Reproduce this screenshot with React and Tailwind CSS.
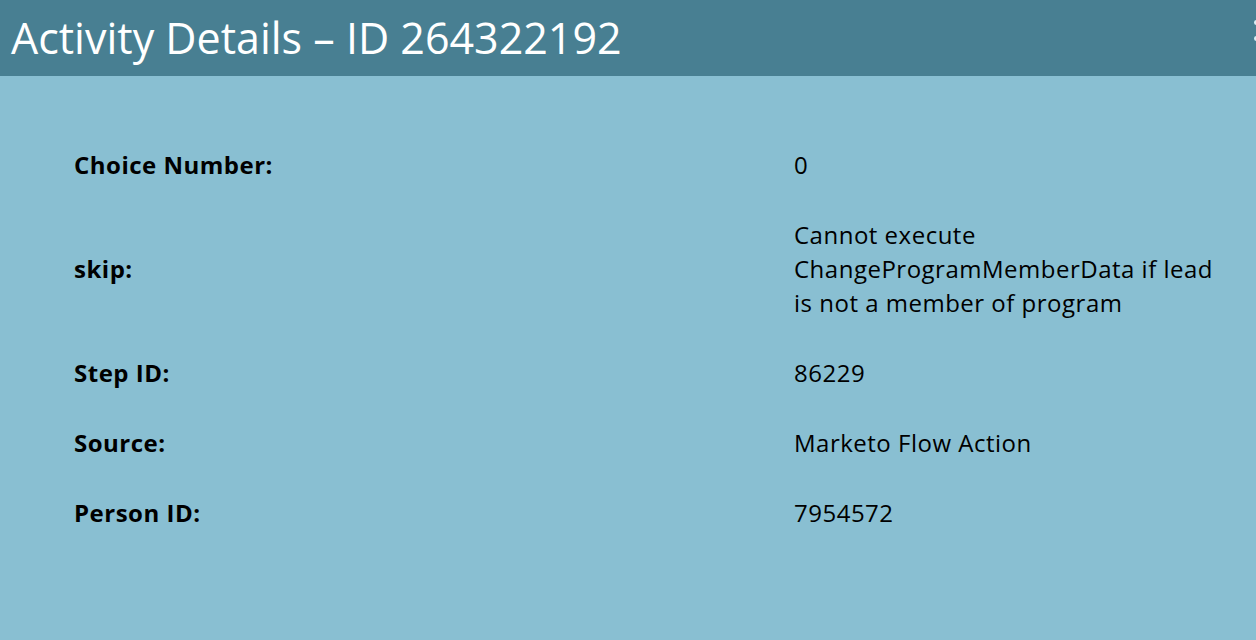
import React from 'react';

const rows = [
  { label: 'Choice Number:', value: '0' },
  { label: 'skip:', value: 'Cannot execute ChangeProgramMemberData if lead is not a member of program' },
  { label: 'Step ID:', value: '86229' },
  { label: 'Source:', value: 'Marketo Flow Action' },
  { label: 'Person ID:', value: '7954572' },
];

const App = () => {
  return (
    <div className="w-[1256px] h-[640px] overflow-hidden bg-[#89bfd2] font-['Open_Sans',sans-serif] text-black">
      {/* header */}
      <div className="h-[76px] bg-[#487f92] flex items-start justify-between pl-[11px] overflow-hidden">
        <h1 className="mt-[12px] text-[43px] leading-[52px] text-white font-normal whitespace-nowrap">
          Activity Details – ID 264322192
        </h1>
        {/* menu button, cut off at the right edge */}
        <div className="w-[2px] shrink-0 overflow-hidden mt-[20px] flex flex-col gap-[11px]">
          <div className="w-[5px] h-[5px] rounded-full bg-[#dbeef4]" />
          <div className="w-[5px] h-[5px] rounded-full bg-[#dbeef4]" />
        </div>
      </div>

      {/* details */}
      <div className="pt-[54px] pl-[74px]">
        {rows.map((row) => (
          <div key={row.label} className="flex items-center py-[18px] text-[24px] leading-[34px] tracking-[0.5px]">
            <div className="w-[720px] shrink-0 font-bold">{row.label}</div>
            <div className="w-[430px]">{row.value}</div>
          </div>
        ))}
      </div>
    </div>
  );
};

export default App;
